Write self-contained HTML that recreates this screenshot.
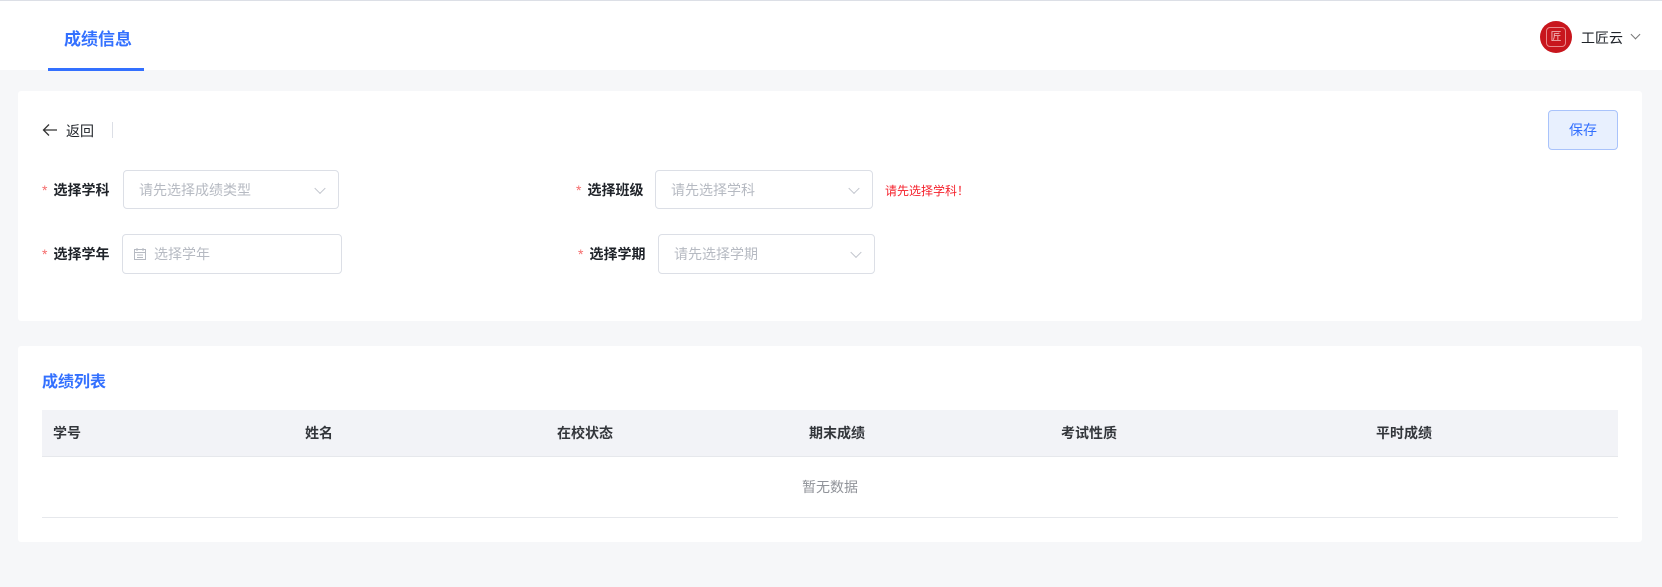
<!DOCTYPE html>
<html><head><meta charset="utf-8"><style>
*{margin:0;padding:0;box-sizing:border-box}
body{width:1662px;height:587px;background:#f6f7f9;font-family:"Liberation Sans","Noto Sans CJK SC",sans-serif;font-size:14px;color:#1f2329;position:relative;overflow:hidden}
.abs{position:absolute}
.hdr{left:0;top:0;width:1662px;height:70px;background:#fff;border-top:1px solid #dcdfe6}
.card{background:#fff;border-radius:3px}
.inp{border:1px solid #dcdfe6;border-radius:4px;background:#fff;color:#b6bac2;font-size:14px;display:flex;align-items:center;padding-left:15px}
.lbl{font-size:14px;font-weight:bold;color:#1f2329}
.lbl b{color:#f56c6c;font-weight:normal;margin-right:6px}
.chev{position:absolute;right:14px;top:50%;width:8px;height:8px;border-right:1px solid #c0c4cc;border-bottom:1px solid #c0c4cc;transform:translateY(-70%) rotate(45deg)}
.th{top:410px;height:47px;line-height:47px;font-weight:bold;color:#33363b;font-size:14px}
</style></head><body>
<div class="abs hdr"></div>
<div class="abs" style="left:64px;top:25px;font-size:17px;font-weight:bold;color:#3370ff">成绩信息</div>
<div class="abs" style="left:48px;top:68px;width:96px;height:3px;background:#3370ff"></div>
<div class="abs" style="left:1540px;top:21px;width:32px;height:32px;border-radius:50%;background:#c8161d;display:flex;align-items:center;justify-content:center"><div style="width:20px;height:20px;border:1px solid #e8888a;border-radius:4px;color:#f3c0c0;font-size:11px;text-align:center;line-height:18px">匠</div></div>
<div class="abs" style="left:1581px;top:28px;font-size:14px;color:#1f2329">工匠云</div>
<div class="abs" style="left:1632px;top:31px;width:7px;height:7px;border-right:1px solid #777;border-bottom:1px solid #777;transform:rotate(45deg)"></div>

<div class="abs card" style="left:18px;top:91px;width:1624px;height:230px"></div>
<svg class="abs" style="left:42px;top:123px" width="16" height="14" viewBox="0 0 16 14"><path d="M15 7H2M7 1.5L1.5 7 7 12.5" stroke="#333" stroke-width="1.3" fill="none"/></svg>
<div class="abs" style="left:66px;top:121px;font-size:14px">返回</div>
<div class="abs" style="left:112px;top:122px;width:1px;height:16px;background:#dcdfe6"></div>
<div class="abs" style="left:1548px;top:110px;width:70px;height:40px;background:#e8f0fe;border:1px solid #a9c3fb;border-radius:4px;color:#3370ff;text-align:center;line-height:38px">保存</div>

<div class="abs lbl" style="left:42px;top:180px"><b>*</b>选择学科</div>
<div class="abs inp" style="left:123px;top:170px;width:216px;height:39px">请先选择成绩类型<i class="chev"></i></div>
<div class="abs lbl" style="left:576px;top:180px"><b>*</b>选择班级</div>
<div class="abs inp" style="left:655px;top:170px;width:218px;height:39px">请先选择学科<i class="chev"></i></div>
<div class="abs" style="left:885px;top:182px;font-size:12px;color:#f5222d">请先选择学科！</div>

<div class="abs lbl" style="left:42px;top:244px"><b>*</b>选择学年</div>
<div class="abs inp" style="left:122px;top:234px;width:220px;height:40px;padding-left:10px"><svg width="14" height="14" viewBox="0 0 14 14" style="margin-right:7px"><rect x="1.5" y="2.5" width="11" height="10" fill="none" stroke="#b6bac2"/><path d="M1.5 5.5h11M4 1v3M10 1v3M4 8h6M4 10.5h6" stroke="#b6bac2"/></svg>选择学年</div>
<div class="abs lbl" style="left:578px;top:244px"><b>*</b>选择学期</div>
<div class="abs inp" style="left:658px;top:234px;width:217px;height:40px">请先选择学期<i class="chev"></i></div>

<div class="abs card" style="left:18px;top:346px;width:1624px;height:196px"></div>
<div class="abs" style="left:42px;top:368px;font-size:16px;font-weight:bold;color:#3370ff">成绩列表</div>
<div class="abs" style="left:42px;top:410px;width:1576px;height:47px;background:#f2f3f7;border-bottom:1px solid #e6e8ec"></div>
<div class="abs th" style="left:53px">学号</div>
<div class="abs th" style="left:305px">姓名</div>
<div class="abs th" style="left:557px">在校状态</div>
<div class="abs th" style="left:809px">期末成绩</div>
<div class="abs th" style="left:1061px">考试性质</div>
<div class="abs th" style="left:1376px">平时成绩</div>
<div class="abs" style="left:42px;top:457px;width:1576px;height:61px;border-bottom:1px solid #e6e8ec;text-align:center;line-height:60px;color:#909399">暂无数据</div>
</body></html>
